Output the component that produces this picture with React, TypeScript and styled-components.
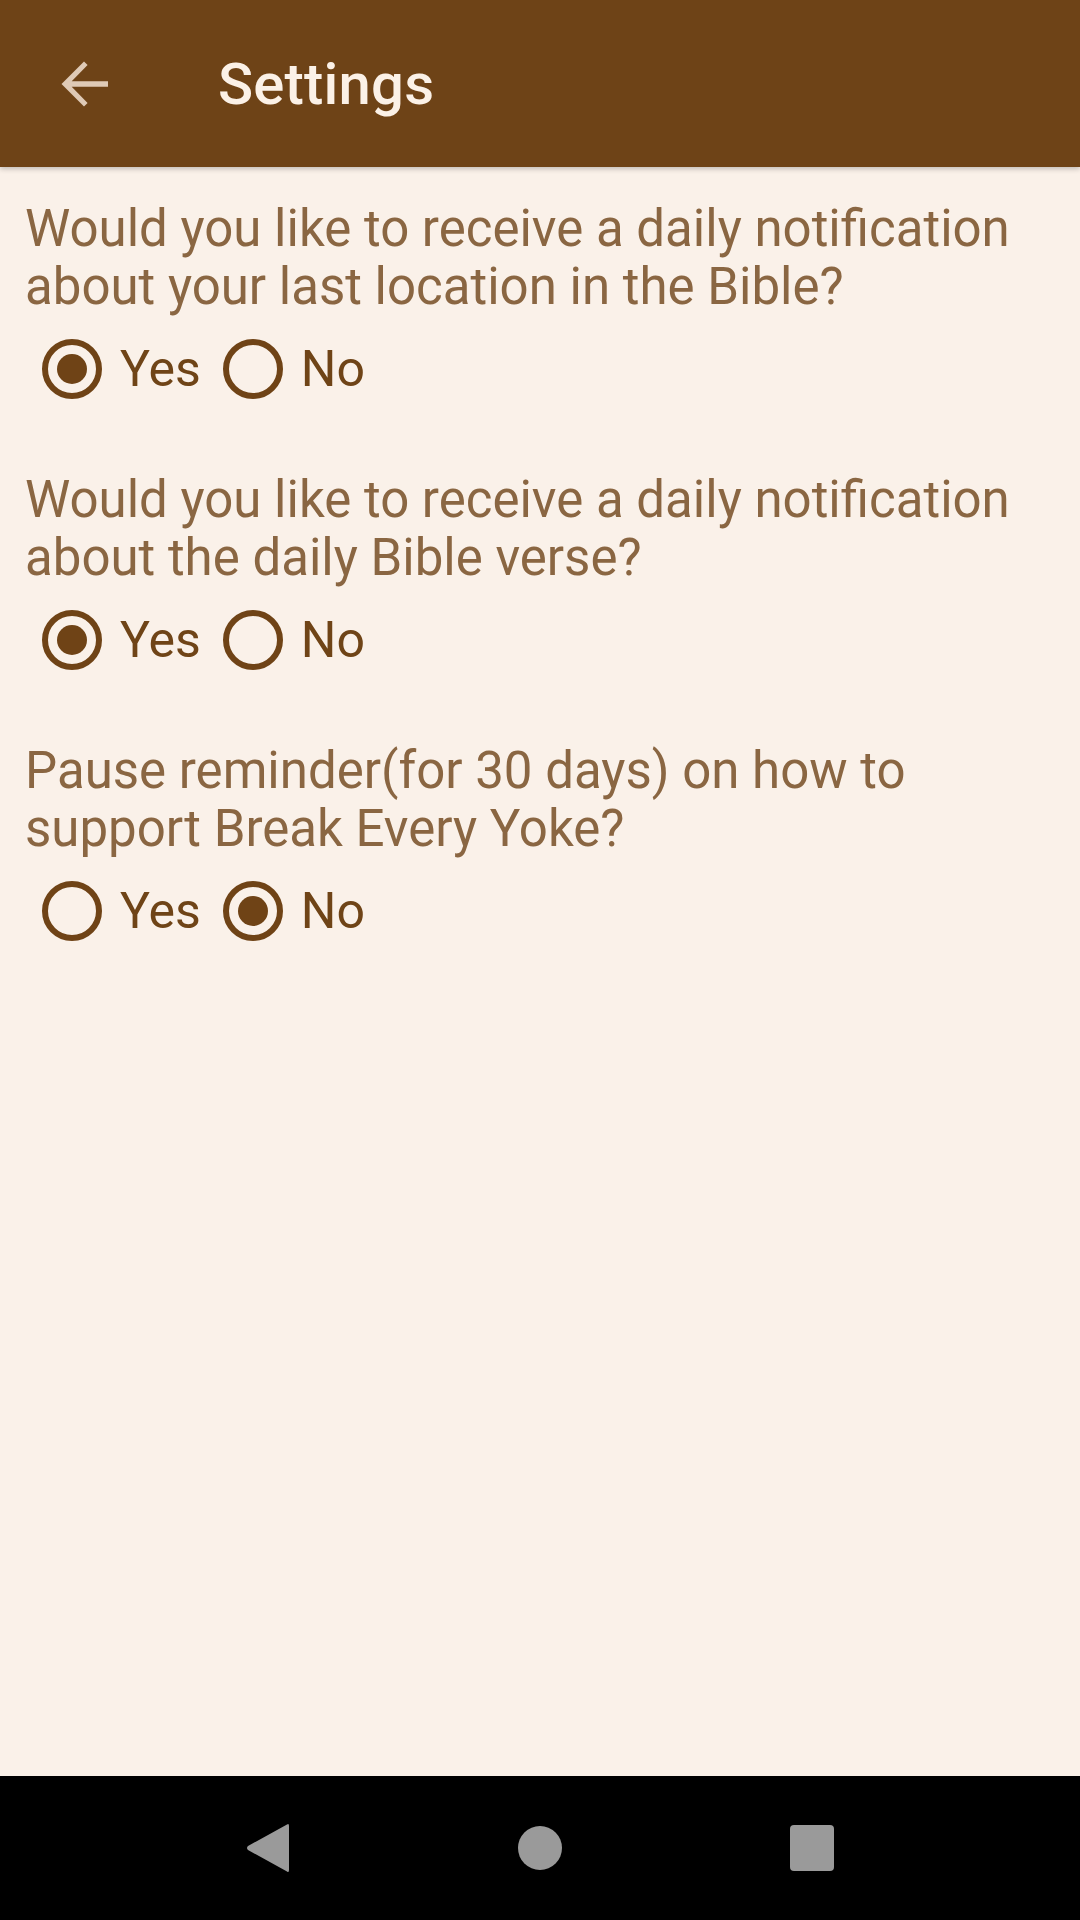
import { useState } from 'react';
import styled, { createGlobalStyle } from 'styled-components';

const GlobalStyle = createGlobalStyle`
  html, body {
    margin: 0;
    padding: 0;
    background: #faf1e9;
  }
  * { box-sizing: border-box; }
`;

const Screen = styled.div`
  width: 1080px;
  height: 1920px;
  display: flex;
  flex-direction: column;
  background: #faf1e9;
  font-family: Roboto, "Noto Sans", sans-serif;
  overflow: hidden;
`;

const Toolbar = styled.header`
  height: 167px;
  flex-shrink: 0;
  background: #6e4317;
  display: flex;
  align-items: center;
  box-shadow: 0 2px 5px rgba(0, 0, 0, 0.22);
  position: relative;
  z-index: 1;
`;

const BackButton = styled.button`
  width: 72px;
  height: 72px;
  margin-left: 48px;
  padding: 0;
  border: none;
  background: none;
  display: flex;
  align-items: center;
  justify-content: center;
  cursor: pointer;
`;

const Title = styled.h1`
  margin: 0 0 0 98px;
  font-size: 58px;
  font-weight: 500;
  color: #fbf1e7;
  letter-spacing: 0.2px;
`;

const Content = styled.main`
  flex: 1;
  padding: 33px 25px 0;
`;

const Group = styled.section`
  margin-bottom: 72px;
`;

const Question = styled.p`
  margin: 0;
  font-size: 51px;
  line-height: 58px;
  color: #8a6642;
`;

const RadioRow = styled.div`
  display: flex;
  align-items: center;
  gap: 22px;
  margin: 23px 0 0 17px;
`;

const Option = styled.label`
  display: flex;
  align-items: center;
  gap: 18px;
  cursor: pointer;
  font-size: 50px;
  color: #6f4417;
  height: 60px;
`;

const Circle = styled.span<{ $checked: boolean }>`
  width: 60px;
  height: 60px;
  border-radius: 50%;
  border: 6px solid #6f4316;
  display: flex;
  align-items: center;
  justify-content: center;

  &::after {
    content: '';
    width: 30px;
    height: 30px;
    border-radius: 50%;
    background: #6f4316;
    display: ${p => (p.$checked ? 'block' : 'none')};
  }
`;

const NavBar = styled.nav`
  height: 144px;
  flex-shrink: 0;
  background: #000;
  display: flex;
  align-items: center;
  justify-content: center;
`;

const NavSlot = styled.div`
  width: 272px;
  display: flex;
  justify-content: center;
`;

type Choice = 'yes' | 'no';

const questions = [
  { id: 'location', text: 'Would you like to receive a daily notification about your last location in the Bible?', initial: 'yes' as Choice },
  { id: 'verse', text: 'Would you like to receive a daily notification about the daily Bible verse?', initial: 'yes' as Choice },
  { id: 'pause', text: 'Pause reminder(for 30 days) on how to support Break Every Yoke?', initial: 'no' as Choice },
];

const SettingGroup = ({ text, initial }: { text: string; initial: Choice }) => {
  const [value, setValue] = useState<Choice>(initial);
  return (
    <Group>
      <Question>{text}</Question>
      <RadioRow>
        <Option onClick={() => setValue('yes')}>
          <Circle $checked={value === 'yes'} />
          Yes
        </Option>
        <Option onClick={() => setValue('no')}>
          <Circle $checked={value === 'no'} />
          No
        </Option>
      </RadioRow>
    </Group>
  );
};

export default function App() {
  return (
    <>
      <GlobalStyle />
      <Screen>
        <Toolbar>
          <BackButton aria-label="Back">
            <svg width="72" height="72" viewBox="0 0 24 24">
              <path d="M20 11.1H7.9l5.3-5.4L12 4.5 4.5 12l7.5 7.5 1.2-1.2-5.3-5.4H20z" fill="#dfcab6" />
            </svg>
          </BackButton>
          <Title>Settings</Title>
        </Toolbar>
        <Content>
          {questions.map(q => (
            <SettingGroup key={q.id} text={q.text} initial={q.initial} />
          ))}
        </Content>
        <NavBar>
          <NavSlot>
            <svg width="44" height="50" viewBox="0 0 44 50">
              <path d="M41 1.5 Q43 0 43 3 V47 Q43 50 41 48.5 L2 27 Q0 25 2 23 Z" fill="#9a9a9a" />
            </svg>
          </NavSlot>
          <NavSlot>
            <svg width="46" height="46" viewBox="0 0 46 46">
              <circle cx="23" cy="23" r="22" fill="#9a9a9a" />
            </svg>
          </NavSlot>
          <NavSlot>
            <svg width="46" height="48" viewBox="0 0 46 48">
              <rect x="1" y="1" width="44" height="46" rx="4" fill="#9a9a9a" />
            </svg>
          </NavSlot>
        </NavBar>
      </Screen>
    </>
  );
}
